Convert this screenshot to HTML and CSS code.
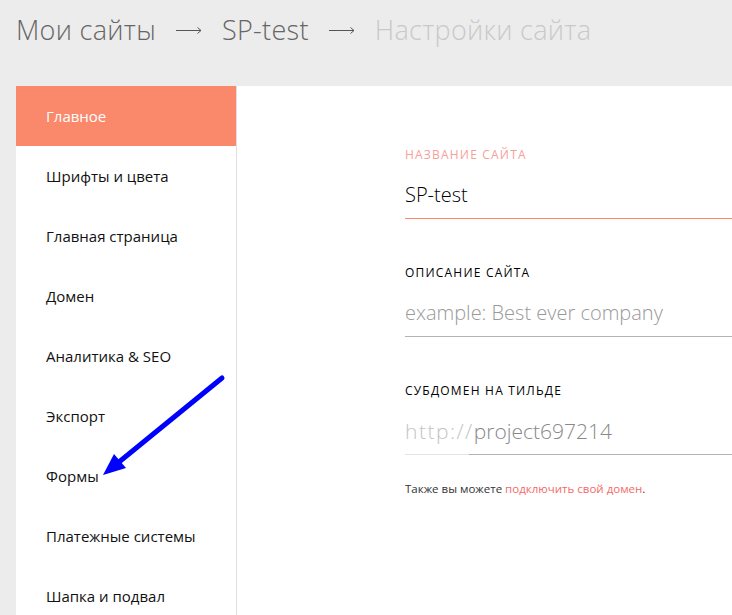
FILE: index.html
```html
<!DOCTYPE html>
<html lang="ru">

<head>
    <meta charset="UTF-8">
    <meta name="viewport" content="width=device-width, initial-scale=1.0">
    <title>Настройки сайта</title>
    <link rel="stylesheet" href="styles.css">
</head>

<body>
    <div class="crumbs">
        <a href="javascript:;" class="crumb">Мои сайты</a>
        <svg class="sep" width="26" height="10" viewBox="0 0 26 10">
            <path d="M0 5.5H25M21.5 2.5L25 5.5L21.5 8.5" fill="none" stroke="#555" stroke-width="1" />
        </svg>
        <a href="javascript:;" class="crumb">SP-test</a>
        <svg class="sep" width="26" height="10" viewBox="0 0 26 10">
            <path d="M0 5.5H25M21.5 2.5L25 5.5L21.5 8.5" fill="none" stroke="#555" stroke-width="1" />
        </svg>
        <span class="crumb current">Настройки сайта</span>
    </div>

    <div class="panel">
        <ul class="menu">
            <li class="active"><a href="javascript:;">Главное</a></li>
            <li><a href="javascript:;">Шрифты и цвета</a></li>
            <li><a href="javascript:;">Главная страница</a></li>
            <li><a href="javascript:;">Домен</a></li>
            <li><a href="javascript:;">Аналитика &amp; SEO</a></li>
            <li><a href="javascript:;">Экспорт</a></li>
            <li><a href="javascript:;">Формы</a></li>
            <li><a href="javascript:;">Платежные системы</a></li>
            <li><a href="javascript:;">Шапка и подвал</a></li>
        </ul>

        <div class="main">
            <div class="field">
                <div class="label pink">Название сайта</div>
                <div class="input filled">SP-test</div>
            </div>
            <div class="field">
                <div class="label">Описание сайта</div>
                <div class="input placeholder">example: Best ever company</div>
            </div>
            <div class="field">
                <div class="label">Субдомен на тильде</div>
                <div class="input sub"><span class="proto">http://</span>project697214</div>
            </div>
            <p class="note">Также вы можете <a href="javascript:;">подключить свой домен</a>.</p>
        </div>
    </div>

    <!-- стрелка поверх меню -->
    <svg class="pointer" width="732" height="615" viewBox="0 0 732 615">
        <line x1="222" y1="378" x2="119" y2="462" stroke="#0000ff" stroke-width="5" stroke-linecap="round" />
        <polygon points="103,475 114,454 126,468" fill="#0000ff" />
    </svg>
</body>

</html>
```

FILE: styles.css
```css
* {
    margin: 0;
    padding: 0;
    box-sizing: border-box;
}

html,
body {
    height: 100%;
    overflow: hidden;
}

body {
    background: #ececec;
    font-family: "Open Sans", "Noto Sans", sans-serif;
    color: #000;
    position: relative;
}

a {
    text-decoration: none;
    color: inherit;
}

.crumbs {
    height: 86px;
    padding: 12px 0 0 16px;
    display: flex;
    align-items: flex-start;
    font-size: 27px;
    font-weight: 300;
    line-height: 36px;
    letter-spacing: 0.3px;
    color: #666;
    white-space: nowrap;
}

.crumbs .sep {
    margin: 13px 20px 0;
}

.crumbs .current {
    color: #c9c9c9;
}

.panel {
    margin-left: 16px;
    width: 760px;
    min-height: 600px;
    background: #fff;
    display: flex;
}

.menu {
    list-style: none;
    width: 221px;
    flex-shrink: 0;
    border-right: 1px solid #dedede;
}

.menu li a {
    display: block;
    height: 60px;
    line-height: 60px;
    padding-left: 30px;
    font-size: 15px;
    color: #111;
}

.menu li.active a {
    background: #fa886b;
    color: #fff;
}

.main {
    padding: 61px 0 0 168px;
    width: 560px;
}

.field {
    margin-bottom: 46px;
}

.label {
    font-size: 12px;
    line-height: 16px;
    letter-spacing: 1.2px;
    text-transform: uppercase;
    color: #000;
    margin-bottom: 17px;
}

.label.pink {
    color: #f6a09c;
}

.input {
    font-size: 20px;
    font-weight: 300;
    line-height: 30px;
    padding-bottom: 8px;
    border-bottom: 1px solid #b3b3b3;
    white-space: nowrap;
}

.input.filled {
    color: #000;
    border-bottom-color: #fa886b;
}

.input.placeholder {
    color: #999;
}

.input.sub {
    color: #888;
    font-size: 21px;
    border-image: linear-gradient(to right, #e3e3e3 65px, #b3b3b3 65px) 1;
}

.input .proto {
    color: #c4c4c4;
    letter-spacing: 1.5px;
}

.note {
    margin-top: -20px;
    font-size: 11.5px;
    line-height: 16px;
    color: #333;
}

.note a {
    color: #f36a6a;
}

.pointer {
    position: absolute;
    left: 0;
    top: 0;
    pointer-events: none;
}
```
